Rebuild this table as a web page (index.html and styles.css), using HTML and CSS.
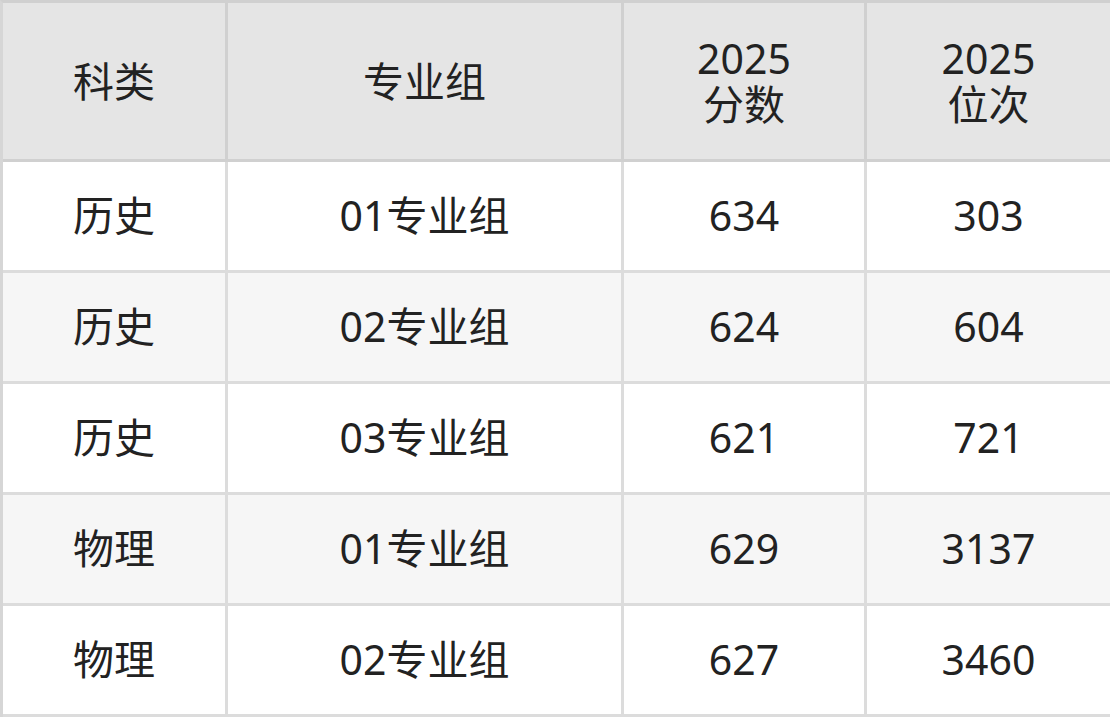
FILE: index.html
```html
<!DOCTYPE html>
<html lang="zh-CN">
<head>
<meta charset="utf-8">
<link rel="stylesheet" href="styles.css">
</head>
<body>
<table class="score-table">
  <colgroup>
    <col class="c1"><col class="c2"><col class="c3"><col class="c4">
  </colgroup>
  <thead>
    <tr>
      <th>科类</th>
      <th>专业组</th>
      <th><span class="hl">2025</span><span class="hl">分数</span></th>
      <th><span class="hl">2025</span><span class="hl">位次</span></th>
    </tr>
  </thead>
  <tbody>
    <tr><td>历史</td><td>01专业组</td><td>634</td><td>303</td></tr>
    <tr><td>历史</td><td>02专业组</td><td>624</td><td>604</td></tr>
    <tr><td>历史</td><td>03专业组</td><td>621</td><td>721</td></tr>
    <tr><td>物理</td><td>01专业组</td><td>629</td><td>3137</td></tr>
    <tr><td>物理</td><td>02专业组</td><td>627</td><td>3460</td></tr>
  </tbody>
</table>
</body>
</html>
```
FILE: styles.css
```css
html, body {
  margin: 0;
  padding: 0;
  background: #ffffff;
}
.score-table {
  border-collapse: separate;
  border-spacing: 0;
  width: 1110px;
  table-layout: fixed;
  font-family: "Noto Sans", "Noto Sans CJK SC", sans-serif;
  font-size: 41px;
  color: #222222;
  border-top: 3px solid #d0d0d0;
  border-left: 3px solid #d6d6d6;
}
.c1 { width: 225px; }
.c2 { width: 396px; }
.c3 { width: 243px; }
.c4 { width: 246px; }
.score-table th,
.score-table td {
  text-align: center;
  vertical-align: middle;
  padding: 0;
  border-right: 3px solid #dcdcdc;
  border-bottom: 3px solid #dcdcdc;
}
.score-table th {
  background: #e5e5e5;
  font-weight: 400;
  height: 156px;
  line-height: 46px;
  border-color: #d0d0d0;
}
.hl {
  display: block;
  height: 46px;
}
.score-table td {
  height: 108px;
  line-height: 1.2;
}
.score-table tbody tr:nth-child(even) td {
  background: #f6f6f6;
}
```
